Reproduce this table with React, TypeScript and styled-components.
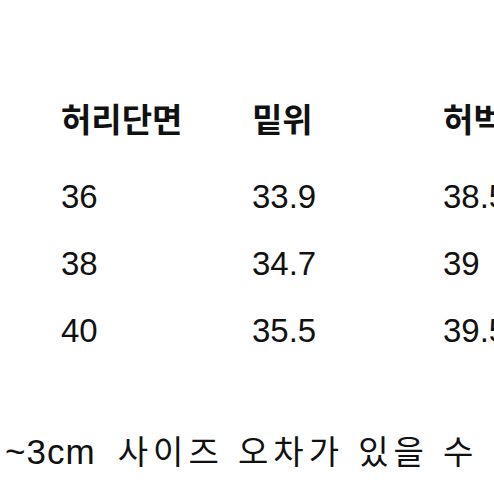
import React from "react";
import styled, { createGlobalStyle } from "styled-components";

const Global = createGlobalStyle`
  html, body {
    margin: 0;
    padding: 0;
    background: #ffffff;
    overflow: hidden;
  }
`;

const Page = styled.div`
  width: 494px;
  height: 494px;
  overflow: hidden;
  background: #ffffff;
  color: #111111;
  display: flex;
  flex-direction: column;
`;

const Table = styled.div`
  padding: 85px 0 0 61px;
  display: grid;
  grid-template-columns: 191px 191px 191px;
  white-space: nowrap;
`;

const HeadCell = styled.div`
  font-family: "Noto Sans CJK KR", "Liberation Sans", sans-serif;
  font-weight: 700;
  font-size: 33px;
  line-height: 67px;
  height: 78px;
`;

const Cell = styled.div`
  font-family: "Liberation Sans", "Noto Sans CJK KR", sans-serif;
  font-size: 33px;
  line-height: 67px;
  height: 67px;
`;

const Note = styled.div`
  margin-top: 68px;
  padding-left: 5px;
  font-family: "Liberation Sans", "Noto Sans CJK KR", sans-serif;
  font-size: 33px;
  line-height: 40px;
  letter-spacing: 5px;
  white-space: nowrap;
`;

const Tolerance = styled.span`
  font-size: 35px;
  letter-spacing: 1px;
  margin-right: 8px;
`;

const headers = ["허리단면", "밑위", "허벅지"];
const rows = [
  ["36", "33.9", "38.5"],
  ["38", "34.7", "39"],
  ["40", "35.5", "39.5"],
];

export default function App() {
  return (
    <Page>
      <Global />
      <Table>
        {headers.map((h) => (
          <HeadCell key={h}>{h}</HeadCell>
        ))}
        {rows.map((r, i) =>
          r.map((v, j) => <Cell key={`${i}-${j}`}>{v}</Cell>)
        )}
      </Table>
      <Note>
        <Tolerance>~3cm</Tolerance> 사이즈 오차가 있을 수
      </Note>
    </Page>
  );
}
